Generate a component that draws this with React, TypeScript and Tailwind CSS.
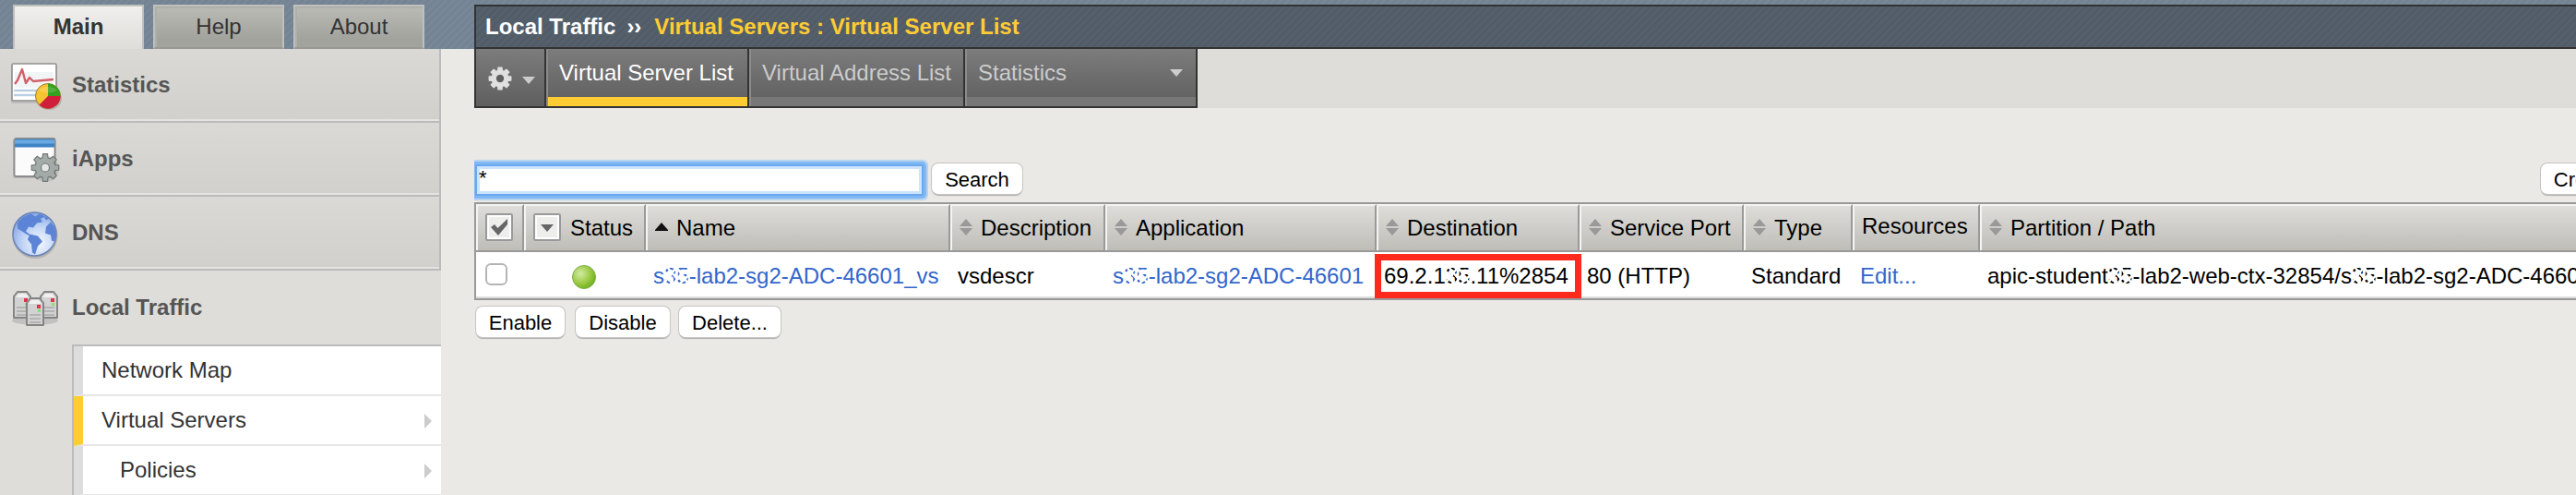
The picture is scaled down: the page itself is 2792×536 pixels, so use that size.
import React from "react";

const FONT = "font-['Liberation_Sans',Arial,sans-serif]";

function Scrub() {
  return (
    <span className="relative inline-block">
      35
      <svg className="absolute left-0 top-0 h-full w-full" viewBox="0 0 27 28" preserveAspectRatio="none" fill="none" stroke="#fff">
        <path d="M0 9 L9 23 M1 20 L12 6 M3 4 L14 17 M9 24 L22 7 M14 25 L27 13 M14 5 L26 22" strokeWidth="2.4" />
        <path d="M0 14 L8 13 M18 12 L26 10 M5 25 L10 19" strokeWidth="2" />
      </svg>
    </span>
  );
}

function Tab({ label, active }: { label: string; active?: boolean }) {
  return (
    <div
      className={
        active
          ? "flex h-[48px] w-[142px] items-center justify-center border-2 border-b-0 border-[#bfbfbe] bg-linear-to-b from-[#f0efed] to-[#deddd9] pb-[2px] text-[24px] leading-[28px] font-bold text-[#333]"
          : "flex h-[48px] w-[142px] items-center justify-center border-2 border-[#bfbfbe] border-b-[#999895] bg-linear-to-b from-[#bbbbb6] to-[#a3a39e] to-80% text-[24px] leading-[28px] text-[#333] shadow-[inset_2px_2px_0_#aeaeaa]"
      }
    >
      {label}
    </div>
  );
}

function NavItem({ icon, label, open }: { icon: React.ReactNode; label: string; open?: boolean }) {
  return (
    <div
      className={
        open
          ? "flex h-[80px] w-[478px] shrink-0 items-center pl-[10px]"
          : "flex h-[80px] w-[478px] shrink-0 items-center border-r-2 border-b-2 border-[#bbb] bg-linear-to-b from-[#dad9d5] to-[#d1d0cc] pl-[10px] shadow-[inset_0_-2px_0_#e4e3e0]"
      }
    >
      <div className="h-[60px] w-[68px] shrink-0">{icon}</div>
      <span className="text-[24px] leading-[28px] font-bold text-[#555]">{label}</span>
    </div>
  );
}

function StatsIcon() {
  return (
    <svg width="60" height="60" viewBox="0 0 60 60">
      <rect x="2" y="8" width="50" height="42" rx="2" fill="#999" opacity="0.35" />
      <rect x="3" y="7" width="48" height="40" rx="1.5" fill="#fff" stroke="#8f8f8f" strokeWidth="1.6" />
      <rect x="6" y="16" width="42" height="17" fill="#f2f5f6" />
      <path d="M5 36h42M5 41h28" stroke="#b9cfe4" strokeWidth="2.5" />
      <path d="M6 29 L9 25 L14 13 L18 28 L22 22 L26 26 L48 24" fill="none" stroke="#d2606a" strokeWidth="2.4" strokeLinejoin="round" />
      <ellipse cx="43" cy="45" rx="14" ry="12" fill="#777" opacity="0.35" />
      <circle cx="42" cy="42" r="13.5" fill="#f4c531" stroke="#a07c30" strokeWidth="1" />
      <path d="M42 42V28.5A13.5 13.5 0 0 1 55.500 42Z" fill="#35a11f" />
      <path d="M42 42H55.500A13.500 13.500 0 0 1 32.500 51.500Z" fill="#cf1f3a" />
      <path d="M32 36a11 7 0 0 1 20 0q-10 5-20 0Z" fill="#fff" opacity="0.15" />
    </svg>
  );
}

function Cog({ cx, cy, r, fill, stroke, hole, holeRatio = 0.3 }: { cx: number; cy: number; r: number; fill: string; stroke: string; hole: string; holeRatio?: number }) {
  const pts: string[] = [];
  for (let i = 0; i < 8; i++) {
    const a = (i * Math.PI) / 4 - Math.PI / 2;
    for (const [d, k] of [[-0.27, 0.74], [-0.17, 1], [0.17, 1], [0.27, 0.74]]) {
      pts.push(`${(cx + Math.cos(a + d) * r * k).toFixed(2)},${(cy + Math.sin(a + d) * r * k).toFixed(2)}`);
    }
  }
  return (
    <g>
      <polygon points={pts.join(" ")} fill={fill} stroke={stroke} strokeWidth="1.2" strokeLinejoin="round" />
      <circle cx={cx} cy={cy} r={r * holeRatio} fill={hole} stroke={stroke} strokeWidth="1.2" />
    </g>
  );
}

function AppsIcon() {
  return (
    <svg width="60" height="60" viewBox="0 0 60 60">
      <rect x="4" y="9" width="47" height="42" rx="2" fill="#888" opacity="0.35" />
      <rect x="5.500" y="8" width="44" height="41" rx="2" fill="#fbfbfc" stroke="#8c8c8c" strokeWidth="1.800" />
      <rect x="6" y="8.500" width="43" height="9" fill="#3f83c4" />
      <rect x="6" y="9.500" width="43" height="4" fill="#6aaae2" />
      <ellipse cx="40" cy="41" rx="14" ry="14" fill="#888" opacity="0.25" />
      <Cog cx={39} cy={39.5} r={15} fill="#a3aba8" stroke="#727a78" hole="#e4e6e5" />
    </svg>
  );
}

function GlobeIcon() {
  return (
    <svg width="60" height="60" viewBox="0 -1.5 60 60">
      <defs>
        <radialGradient id="globe" cx="0.6" cy="0.7" r="0.75">
          <stop offset="0" stopColor="#f4f8ff" />
          <stop offset="0.5" stopColor="#c3d5f6" />
          <stop offset="1" stopColor="#7da0e2" />
        </radialGradient>
      </defs>
      <circle cx="28" cy="32" r="24.500" fill="#888" opacity="0.4" />
      <circle cx="27.500" cy="30" r="23.500" fill="url(#globe)" stroke="#6b83b5" strokeWidth="1.500" />
      <path d="M9 18 Q14 10 24 8 L28 11 L33 8 L39 11 L34 13 L36 17 L30 18 L26 23 L21 22 L18 27 L23 31 L20 31 L14 27 L9 24 Z" fill="#5b84d6" />
      <path d="M22 30 L31 32 L36 38 L31 43 L28 52 L25 50 L24 41 L20 36 Z" fill="#5b84d6" />
      <path d="M40 22 L45 17 L49 22 L51 30 L49 38 L46 37 L45 31 L39 29 Z" fill="#5b84d6" />
      <path d="M37 10l6 3-3 2z" fill="#5b84d6" />
    </svg>
  );
}

function Server({ x, y, w, h }: { x: number; y: number; w: number; h: number }) {
  return (
    <g transform={`translate(${x} ${y})`}>
      <path d={`M1 6 L5 1 H${w - 5} L${w - 1} 6 V${h - 1} H1 Z`} fill="#d2d2d2" stroke="#858585" strokeWidth="2" strokeLinejoin="round" />
      <path d={`M3 7 L6 3 H${w - 6} L${w - 3} 7 Z`} fill="#f0f0f0" />
      <path d={`M4 ${h - 12}H${w - 4}M4 ${h - 8}H${w - 4}M4 ${h - 4}H${w - 4}`} stroke="#a9a9a9" strokeWidth="1.500" />
      <rect x={w - 8} y="8" width="4" height="4" fill="#e0344a" />
      <rect x={w - 7} y="13" width="3" height="3" fill="#8be06a" />
    </g>
  );
}

function ServersIcon() {
  return (
    <svg width="60" height="60" viewBox="0 0 60 60">
      <ellipse cx="28" cy="44" rx="25" ry="5" fill="#999" opacity="0.4" />
      <Server x={4} y={12} w={20} h={30} />
      <Server x={33} y={12} w={20} h={30} />
      <Server x={18} y={19} w={20} h={31} />
    </svg>
  );
}

function SubItem({ label, active, arrow, indent }: { label: string; active?: boolean; arrow?: boolean; indent?: boolean }) {
  return (
    <div
      className={
        active
          ? "flex h-[54px] shrink-0 items-center justify-between border-b-2 border-l-[10px] border-b-[#e6e6e6] border-l-[#ffcc33] bg-white pr-[10px]"
          : "flex h-[54px] shrink-0 items-center justify-between border-b-2 border-l-[10px] border-b-[#e6e6e6] border-l-[#dddddd] bg-white pr-[10px]"
      }
    >
      <span className={indent ? "pl-[40px] text-[24px] leading-[28px] text-[#333]" : "pl-[20px] text-[24px] leading-[28px] text-[#333]"}>{label}</span>
      {arrow && (
        <svg width="8" height="16" viewBox="0 0 8 16" className="mt-[2px]">
          <path d="M0 0L8 8L0 16Z" fill="#ccc" />
        </svg>
      )}
    </div>
  );
}

function Btn({ label, className }: { label: string; className: string }) {
  return (
    <button
      className={`flex h-[33px] shrink-0 items-center justify-center rounded-[7px] bg-white pt-[2px] text-[22px] leading-[26px] whitespace-nowrap text-black shadow-[0_0_0_1px_#c6c5c3,0_2px_1px_#b0afad] ${className}`}
    >
      {label}
    </button>
  );
}

function SortIcon() {
  return (
    <svg width="14" height="18" viewBox="0 0 14 18" className="-mt-[2px] mr-[9px] shrink-0">
      <path d="M7 0L14 8H0ZM7 18L0 10H14Z" fill="#999" />
    </svg>
  );
}

function Th({ children, className = "" }: { children: React.ReactNode; className?: string }) {
  return (
    <div className={`flex items-center border-t-2 border-r-2 border-l-2 border-t-[#f4f4f2] border-r-[#999] border-l-[#f4f4f2] bg-linear-to-b from-[#deddd9] to-[#bebdb8] pl-[8px] whitespace-nowrap ${className}`}>
      {children}
    </div>
  );
}

function BoxIcon({ d, className = "" }: { d: string; className?: string }) {
  return (
    <svg width="30" height="30" viewBox="0 0 30 30" className={`-mt-[2px] shrink-0 ${className}`}>
      <rect x="1" y="1" width="28" height="28" rx="1.500" fill="#eeeeed" stroke="#999" strokeWidth="2" />
      <rect x="3" y="3" width="24" height="24" fill="none" stroke="#fff" strokeWidth="2" />
      <path d={d} fill="#666" />
    </svg>
  );
}

const COLS = "grid grid-cols-[52px_132px_330px_168px_294px_220px_178px_118px_138px_800px]";

function MenuTab({ label, active, className }: { label: string; active?: boolean; className: string }) {
  return (
    <div className={`flex flex-col border-r-2 border-[#333] ${className}`}>
      <div className={active ? "flex flex-1 items-center bg-linear-to-b from-[#7c7c7c] to-[#636363] pl-[12px] text-white" : "flex flex-1 items-center justify-between border-l-2 border-[#8c8c8c] bg-linear-to-b from-[#7c7c7c] to-[#636363] pr-[14px] pl-[12px] text-[#ccc]"}>
        <span className="whitespace-nowrap">{label}</span>
        {label === "Statistics" && (
          <svg width="14" height="8" viewBox="0 0 14 8">
            <path d="M0 0H14L7 8Z" fill="#ccc" />
          </svg>
        )}
      </div>
      <div className={active ? "h-[10px] bg-[#ffcc33]" : "h-[10px] border-l-2 border-[#8c8c8c] bg-[#777]"} />
    </div>
  );
}

export default function App() {
  return (
    <div className={`flex h-[536px] w-[2792px] flex-col overflow-hidden bg-[#eae9e5] text-[24px] leading-[28px] text-black ${FONT}`}>
      <header className="flex h-[53px] shrink-0 items-start bg-[repeating-linear-gradient(135deg,#728292_0px,#7a8998_2.83px,#728292_5.66px)] pt-[5px]">
        <div className="flex w-[514px] shrink-0 gap-[10px] pl-[14px]">
          <Tab label="Main" active />
          <Tab label="Help" />
          <Tab label="About" />
        </div>
        <div className="flex h-[48px] flex-1 items-center border-2 border-r-0 border-[#333] bg-[repeating-linear-gradient(135deg,#4f5b67_0px,#57616b_2.83px,#4f5b67_5.66px)] pl-[10px] font-bold text-white">
          <span>Local Traffic</span>
          <span className="ml-[12px]">››</span>
          <span className="ml-[14px] text-[#ffcc33]">Virtual Servers : Virtual Server List</span>
        </div>
      </header>

      <div className="flex min-h-0 flex-1">
        <nav className="flex w-[478px] shrink-0 flex-col overflow-hidden bg-[#deddd9]">
          <NavItem icon={<StatsIcon />} label="Statistics" />
          <NavItem icon={<AppsIcon />} label="iApps" />
          <NavItem icon={<GlobeIcon />} label="DNS" />
          <NavItem icon={<ServersIcon />} label="Local Traffic" open />
          <div className="ml-[78px] flex h-[170px] shrink-0 flex-col border-t-2 border-l-2 border-[#bbb]">
            <SubItem label="Network Map" />
            <SubItem label="Virtual Servers" active arrow />
            <SubItem label="Policies" arrow indent />
          </div>
        </nav>

        <main className="flex min-w-0 flex-1 flex-col pl-[36px]">
          <div className="flex h-[64px] shrink-0 bg-[#deddd9]">
            <div className="flex border-b-2 border-l-2 border-[#333]">
              <div className="flex w-[76px] items-center border-r-2 border-[#333] bg-linear-to-b from-[#7c7c7c] to-[#5f5f5f] pl-[12px]">
                <svg width="28" height="28" viewBox="0 0 28 28" className="mt-[2px]">
                  <Cog cx={14} cy={14} r={12} fill="#e0e0e0" stroke="#e0e0e0" hole="#606060" holeRatio={0.4} />
                </svg>
                <svg width="14" height="8" viewBox="0 0 14 8" className="mt-[6px] ml-[10px]">
                  <path d="M0 0H14L7 8Z" fill="#ccc" />
                </svg>
              </div>
              <div className="w-[2px] bg-[#8c8c8c]" />
              <MenuTab label="Virtual Server List" active className="w-[218px]" />
              <MenuTab label="Virtual Address List" className="w-[234px]" />
              <MenuTab label="Statistics" className="w-[252px]" />
            </div>
          </div>

          <div className="flex h-[102px] shrink-0 pt-[60px]">
            <div className="mt-[1px] ml-[1px] flex h-[34px] w-[486px] shrink-0 items-start rounded-r-[2px] border-2 border-[#6aa7ec] bg-white pl-[2px] text-[22px] leading-[26px] shadow-[inset_0_0_0_3px_#cce4fd,0_0_0_3px_#7fb8f5,0_0_0_5px_#b8d3ee] [clip-path:inset(-6px_-6px_-6px_-1px)]">
              *
            </div>
            <Btn label="Search" className="ml-[9px] w-[98px]" />
            <Btn label="Create..." className="ml-[1646px] w-[112px]" />
          </div>

          <div className="flex h-[106px] shrink-0 flex-col overflow-hidden border-t-2 border-b-2 border-l-2 border-[#999]">
            <div className={`h-[52px] shrink-0 border-b-2 border-[#999] ${COLS}`}>
              <Th>
                <BoxIcon d="M6 15 L10 12 L13.500 16 L24 6 V12 L14 24 Z" />
              </Th>
              <Th>
                <BoxIcon d="M8 12H22L15 20Z" className="mr-[10px]" />
                Status
              </Th>
              <Th>
                <svg width="14" height="9" viewBox="0 0 14 9" className="-mt-[4px] mr-[9px] shrink-0">
                  <path d="M7 0L14 8V9H0V8Z" fill="#111" />
                </svg>
                Name
              </Th>
              <Th><SortIcon />Description</Th>
              <Th><SortIcon />Application</Th>
              <Th><SortIcon />Destination</Th>
              <Th><SortIcon />Service Port</Th>
              <Th><SortIcon />Type</Th>
              <Th className="pb-[4px]">Resources</Th>
              <Th><SortIcon />Partition / Path</Th>
            </div>
            <div className={`h-[50px] shrink-0 items-center border-b-2 border-[#ddd] bg-white whitespace-nowrap ${COLS}`}>
              <div className="pl-[10px]">
                <div className="h-[24px] w-[24px] rounded-[6px] border-2 border-[#b5b5b5] bg-white" />
              </div>
              <div className="pl-[52px]">
                <svg width="26" height="26" viewBox="0 0 26 26" className="mt-[6px]">
                  <defs>
                    <radialGradient id="ball" cx="0.35" cy="0.35" r="0.7">
                      <stop offset="0" stopColor="#d2eaa4" />
                      <stop offset="0.6" stopColor="#9ccb45" />
                      <stop offset="1" stopColor="#6fae1c" />
                    </radialGradient>
                  </defs>
                  <circle cx="13" cy="13" r="12.500" fill="url(#ball)" stroke="#7fae45" strokeWidth="1" />
                </svg>
              </div>
              <div className="pt-[4px] pl-[8px] text-[#3366cc]">s<Scrub />-lab2-sg2-ADC-46601_vs</div>
              <div className="pt-[4px] pl-[8px]">vsdescr</div>
              <div className="pt-[4px] pl-[8px] text-[#3366cc]">s<Scrub />-lab2-sg2-ADC-46601</div>
              <div className="relative pt-[4px] pl-[8px]">
                69.2.1<Scrub />.11%2854
                <div className="absolute -top-[6px] -left-[2px] h-[48px] w-[224px] border-[7px] border-[#ff2a1c]" />
              </div>
              <div className="pt-[4px] pl-[8px]">80 (HTTP)</div>
              <div className="pt-[4px] pl-[8px]">Standard</div>
              <div className="pt-[4px] pl-[8px] text-[#3366cc]">Edit...</div>
              <div className="pt-[4px] pl-[8px]">apic-student<Scrub />-lab2-web-ctx-32854/s<Scrub />-lab2-sg2-ADC-46601_vs</div>
            </div>
          </div>

          <div className="flex pt-[7px] pl-[2px]">
            <Btn label="Enable" className="w-[96px]" />
            <Btn label="Disable" className="ml-[12px] w-[102px]" />
            <Btn label="Delete..." className="ml-[10px] w-[110px]" />
          </div>
        </main>
      </div>
    </div>
  );
}
